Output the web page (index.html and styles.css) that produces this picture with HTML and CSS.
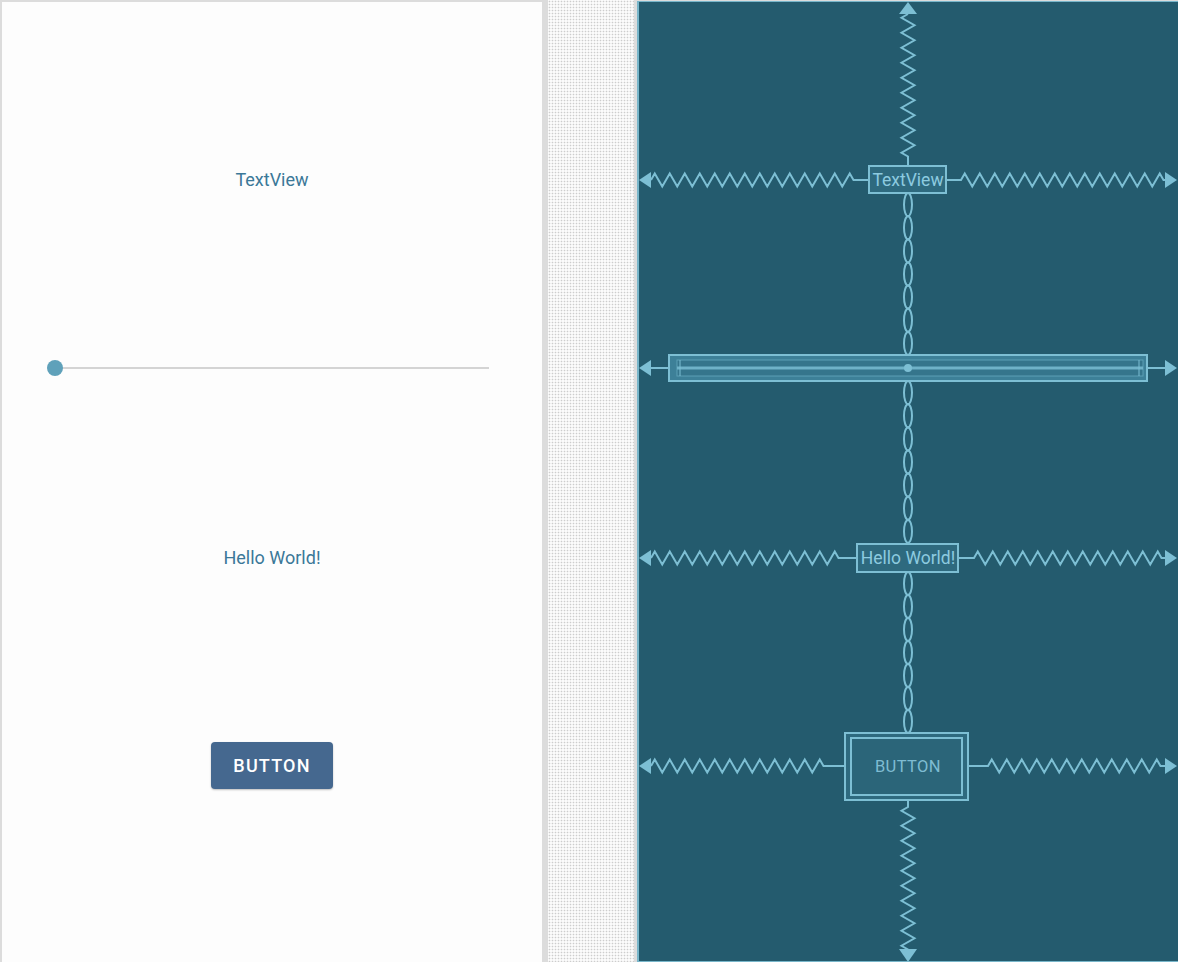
FILE: index.html
```html
<!DOCTYPE html>
<html>
<head>
<meta charset="utf-8">
<link rel="stylesheet" href="styles.css">
</head>
<body>
<div class="stage">
  <div class="phone">
    <div class="tv">TextView</div>
    <div class="seek"><div class="thumb"></div></div>
    <div class="hello">Hello World!</div>
    <div class="btn">BUTTON</div>
  </div>
  <div class="dots"></div>
  <div class="blueprint">
    <svg class="bp-svg" width="541" height="961" viewBox="0 0 541 961">
      <g transform="translate(1,1)" class="bp">
        <!-- top vertical -->
        <polygon class="arrow" points="270,0 261,12 279,12"/>
        <path class="ln" d="M270 12 l-6.5 3.75 l13 7.5 l-13 7.5 l13 7.5 l-13 7.5 l13 7.5 l-13 7.5 l13 7.5 l-13 7.5 l13 7.5 l-13 7.5 l13 7.5 l-13 7.5 l13 7.5 l-13 7.5 l13 7.5 l-13 7.5 l13 7.5 l-13 7.5 l6.5 3.75 L270 164"/>

        <!-- TextView -->
        <polygon class="arrow" points="1,178 13,170 13,186"/>
        <path class="ln" d="M13 178 l3.75 -6.5 l7.5 13 l7.5 -13 l7.5 13 l7.5 -13 l7.5 13 l7.5 -13 l7.5 13 l7.5 -13 l7.5 13 l7.5 -13 l7.5 13 l7.5 -13 l7.5 13 l7.5 -13 l7.5 13 l7.5 -13 l7.5 13 l7.5 -13 l7.5 13 l7.5 -13 l7.5 13 l7.5 -13 l7.5 13 l7.5 -13 l7.5 13 l7.5 -13 l3.75 6.5 L231 178"/>
        <path class="ln" d="M308 178 L323 178 l3.75 -6.5 l7.5 13 l7.5 -13 l7.5 13 l7.5 -13 l7.5 13 l7.5 -13 l7.5 13 l7.5 -13 l7.5 13 l7.5 -13 l7.5 13 l7.5 -13 l7.5 13 l7.5 -13 l7.5 13 l7.5 -13 l7.5 13 l7.5 -13 l7.5 13 l7.5 -13 l7.5 13 l7.5 -13 l7.5 13 l7.5 -13 l7.5 13 l7.5 -13 l3.75 6.5 L528 178"/>
        <polygon class="arrow" points="539,178 527,170 527,186"/>
        <rect class="box" x="231" y="164" width="77" height="27"/>
        <text class="bp-text" x="270" y="178">TextView</text>

        <!-- chain 1 -->
        <g class="chain">
          <ellipse cx="270" cy="202.6" rx="4" ry="11.5"/>
          <ellipse cx="270" cy="225.7" rx="4" ry="11.5"/>
          <ellipse cx="270" cy="248.9" rx="4" ry="11.5"/>
          <ellipse cx="270" cy="272" rx="4" ry="11.5"/>
          <ellipse cx="270" cy="295.1" rx="4" ry="11.5"/>
          <ellipse cx="270" cy="318.3" rx="4" ry="11.5"/>
          <ellipse cx="270" cy="341.4" rx="4" ry="11.5"/>
        </g>

        <!-- Seekbar -->
        <polygon class="arrow" points="1,366 13,358 13,374"/>
        <path class="ln" d="M13 366 L31 366"/>
        <path class="ln" d="M509 366 L528 366"/>
        <polygon class="arrow" points="539,366 527,358 527,374"/>
        <rect class="seekbox" x="31" y="353" width="478" height="26"/>
        <rect class="seekinner" x="39" y="358" width="466" height="16"/>
        <line class="seekline" x1="39" y1="366" x2="505" y2="366"/>
        <line class="ln thin" x1="42" y1="358" x2="42" y2="374"/>
        <line class="ln thin" x1="501" y1="358" x2="501" y2="374"/>
        <circle class="dot" cx="270" cy="366" r="4"/>

        <!-- chain 2 -->
        <g class="chain">
          <ellipse cx="270" cy="390.6" rx="4" ry="11.5"/>
          <ellipse cx="270" cy="413.7" rx="4" ry="11.5"/>
          <ellipse cx="270" cy="436.9" rx="4" ry="11.5"/>
          <ellipse cx="270" cy="460" rx="4" ry="11.5"/>
          <ellipse cx="270" cy="483.1" rx="4" ry="11.5"/>
          <ellipse cx="270" cy="506.3" rx="4" ry="11.5"/>
          <ellipse cx="270" cy="529.4" rx="4" ry="11.5"/>
        </g>

        <!-- Hello World -->
        <polygon class="arrow" points="1,556 13,548 13,564"/>
        <path class="ln" d="M13 556 l3.75 -6.5 l7.5 13 l7.5 -13 l7.5 13 l7.5 -13 l7.5 13 l7.5 -13 l7.5 13 l7.5 -13 l7.5 13 l7.5 -13 l7.5 13 l7.5 -13 l7.5 13 l7.5 -13 l7.5 13 l7.5 -13 l7.5 13 l7.5 -13 l7.5 13 l7.5 -13 l7.5 13 l7.5 -13 l7.5 13 l7.5 -13 l3.75 6.5 L219 556"/>
        <path class="ln" d="M320 556 L336 556 l3.75 -6.5 l7.5 13 l7.5 -13 l7.5 13 l7.5 -13 l7.5 13 l7.5 -13 l7.5 13 l7.5 -13 l7.5 13 l7.5 -13 l7.5 13 l7.5 -13 l7.5 13 l7.5 -13 l7.5 13 l7.5 -13 l7.5 13 l7.5 -13 l7.5 13 l7.5 -13 l7.5 13 l7.5 -13 l7.5 13 l7.5 -13 l3.75 6.5 L528 556"/>
        <polygon class="arrow" points="539,556 527,548 527,564"/>
        <rect class="box" x="219" y="542" width="101" height="28"/>
        <text class="bp-text" x="270" y="556">Hello World!</text>

        <!-- chain 3 -->
        <g class="chain">
          <ellipse cx="270" cy="581.5" rx="4" ry="11.5"/>
          <ellipse cx="270" cy="604.5" rx="4" ry="11.5"/>
          <ellipse cx="270" cy="627.5" rx="4" ry="11.5"/>
          <ellipse cx="270" cy="650.5" rx="4" ry="11.5"/>
          <ellipse cx="270" cy="673.5" rx="4" ry="11.5"/>
          <ellipse cx="270" cy="696.5" rx="4" ry="11.5"/>
          <ellipse cx="270" cy="719.5" rx="4" ry="11.5"/>
        </g>

        <!-- Button -->
        <polygon class="arrow" points="1,764 13,756 13,772"/>
        <path class="ln" d="M13 764 l3.75 -6.5 l7.5 13 l7.5 -13 l7.5 13 l7.5 -13 l7.5 13 l7.5 -13 l7.5 13 l7.5 -13 l7.5 13 l7.5 -13 l7.5 13 l7.5 -13 l7.5 13 l7.5 -13 l7.5 13 l7.5 -13 l7.5 13 l7.5 -13 l7.5 13 l7.5 -13 l7.5 13 l7.5 -13 l3.75 6.5 L207 764"/>
        <path class="ln" d="M330 764 L350 764 l3.75 -6.5 l7.5 13 l7.5 -13 l7.5 13 l7.5 -13 l7.5 13 l7.5 -13 l7.5 13 l7.5 -13 l7.5 13 l7.5 -13 l7.5 13 l7.5 -13 l7.5 13 l7.5 -13 l7.5 13 l7.5 -13 l7.5 13 l7.5 -13 l7.5 13 l7.5 -13 l7.5 13 l7.5 -13 l3.75 6.5 L528 764"/>
        <polygon class="arrow" points="539,764 527,756 527,772"/>
        <rect class="box" x="207" y="731" width="123" height="67"/>
        <rect class="box inner" x="213" y="736" width="111" height="57"/>
        <text class="bp-text btn-text" x="270" y="764">BUTTON</text>

        <!-- bottom vertical -->
        <path class="ln" d="M270 798 L270 805 l-6.5 3.75 l13 7.5 l-13 7.5 l13 7.5 l-13 7.5 l13 7.5 l-13 7.5 l13 7.5 l-13 7.5 l13 7.5 l-13 7.5 l13 7.5 l-13 7.5 l13 7.5 l-13 7.5 l13 7.5 l-13 7.5 l13 7.5 l-13 7.5 l6.5 3.75 L270 948"/>
        <polygon class="arrow" points="270,960 261,947 279,947"/>
      </g>
    </svg>
  </div>
</div>
</body>
</html>
```
FILE: styles.css
```css
html, body {
  margin: 0;
  padding: 0;
}
body {
  background: #dcdcdc;
  width: 1178px;
  height: 962px;
  overflow: hidden;
  font-family: Roboto, "Noto Sans", sans-serif;
}
.stage {
  display: flex;
  align-items: flex-start;
  height: 962px;
}
.phone {
  margin: 2px 0 0 2px;
  width: 540px;
  height: 960px;
  background: #fdfdfd;
  display: flex;
  flex-direction: column;
  align-items: center;
}
.tv, .hello {
  font-size: 18px;
  line-height: 20px;
  color: #3b7898;
}
.tv {
  margin-top: 168px;
}
.seek {
  align-self: stretch;
  margin: 170px 53px 0 45px;
  height: 16px;
  background: linear-gradient(#d4d4d4, #d4d4d4) no-repeat 8px 7px / calc(100% - 8px) 2px;
}
.thumb {
  width: 16px;
  height: 16px;
  border-radius: 50%;
  background: #5fa1ba;
}
.hello {
  margin-top: 172px;
}
.btn {
  margin-top: 174px;
  width: 122px;
  height: 47px;
  border-radius: 4px;
  background: #45688f;
  color: #ffffff;
  font-size: 18px;
  font-weight: 500;
  letter-spacing: 1.2px;
  display: flex;
  align-items: center;
  justify-content: center;
  box-shadow: 0 1px 2px rgba(0, 0, 0, 0.25);
}
.dots {
  margin-left: 6px;
  width: 86px;
  height: 962px;
  background: #fbfbfb radial-gradient(circle, #cdcdcd 0.7px, transparent 1.1px) 0 0 / 3px 3px;
}
.blueprint {
  margin-left: 3px;
  margin-top: 1px;
  width: 541px;
  height: 961px;
  background: #245b6e;
  box-shadow: inset 2px 1px 0 #78b6ca, inset 0 -1px 0 #78b6ca;
}
.bp-svg {
  display: block;
}
.ln {
  fill: none;
  stroke: #7dbfd4;
  stroke-width: 2;
  stroke-linejoin: miter;
}
.ln.thin {
  stroke-width: 1;
}
.arrow {
  fill: #7dbfd4;
}
.chain ellipse {
  fill: none;
  stroke: #7dbfd4;
  stroke-width: 2;
}
.box {
  fill: #2e6a7f;
  stroke: #7dbfd4;
  stroke-width: 2;
}
.box.inner {
  fill: #2b6579;
}
.seekbox {
  fill: #3d8098;
  stroke: #7dbfd4;
  stroke-width: 2;
}
.seekinner {
  fill: #35758c;
  stroke: #5d9fb5;
  stroke-width: 1;
}
.seekline {
  stroke: #6fb2c8;
  stroke-width: 3;
}
.dot {
  fill: #7dbfd4;
}
.bp-text {
  font-family: Roboto, "Noto Sans", sans-serif;
  font-size: 17.5px;
  fill: #8dcbe0;
  text-anchor: middle;
  dominant-baseline: central;
}
.btn-text {
  font-size: 16.5px;
  letter-spacing: 0.4px;
  fill: #7fbcd2;
}
```
